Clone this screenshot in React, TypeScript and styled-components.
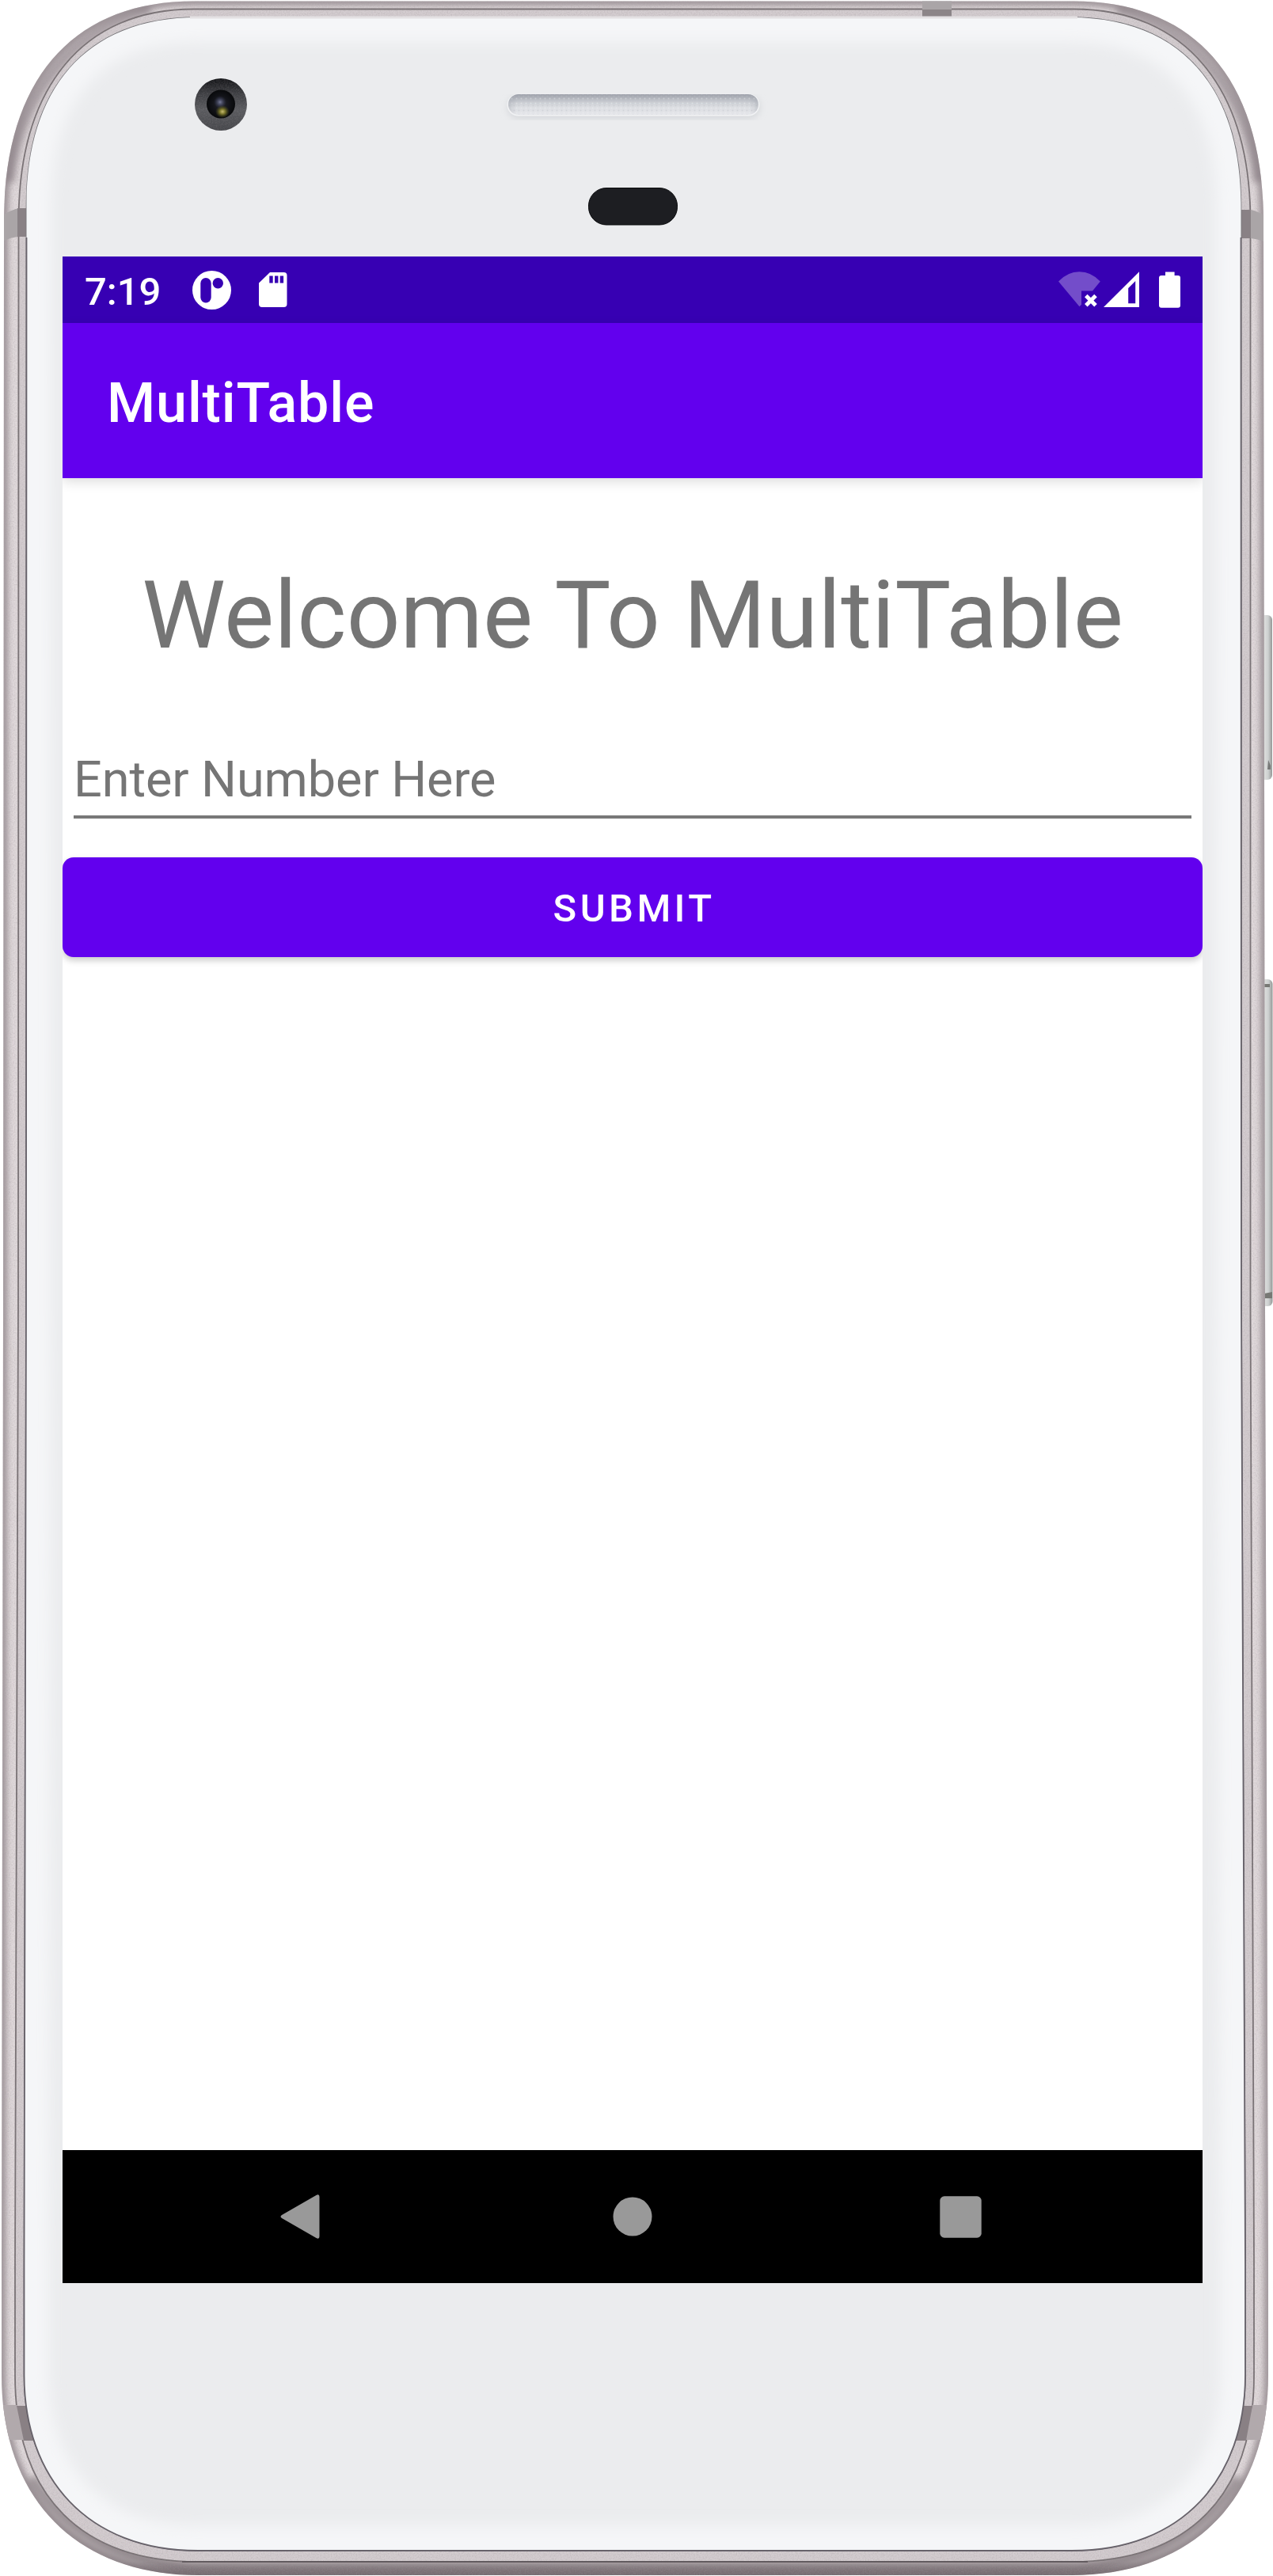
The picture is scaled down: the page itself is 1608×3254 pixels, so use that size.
import React from 'react';
import styled, { createGlobalStyle } from 'styled-components';

const GlobalStyle = createGlobalStyle`
  html, body { margin: 0; padding: 0; background: #fff; }
  *, *::before, *::after { box-sizing: border-box; }
`;

const Phone = styled.main`
  position: relative;
  width: 1608px;
  height: 3254px;
  padding: 324px 89px 370px 79px;
  overflow: hidden;
  font-family: Roboto, 'Liberation Sans', sans-serif;
`;

const BodyArt = styled.svg`
  position: absolute;
  inset: 0;
  display: block;
`;

const Screen = styled.section`
  position: relative;
  display: flex;
  flex-direction: column;
  width: 1440px;
  height: 2560px;
  overflow: hidden;
  background: #fff;
`;

const StatusBar = styled.header`
  display: flex;
  align-items: center;
  flex: 0 0 84px;
  padding: 0 27px 0 28px;
  background: #3700b3;
`;

const Clock = styled.time`
  width: 136px;
  padding-top: 4px;
  color: #fff;
  font-size: 49px;
  font-weight: 500;
  line-height: 57px;
`;

const Icon = styled.svg<{ $after?: number }>`
  display: block;
  flex: none;
  margin-right: ${(p) => p.$after ?? 0}px;
`;

const Spacer = styled.div`
  flex: 1;
`;

const AppBar = styled.div`
  display: flex;
  align-items: center;
  flex: 0 0 196px;
  padding: 6px 56px 0;
  background: #6200ee;
  box-shadow: 0 5px 14px rgba(0, 0, 0, 0.13);
`;

const AppTitle = styled.h1`
  margin: 0;
  color: #fff;
  font-size: 70px;
  font-weight: 500;
  line-height: 82px;
  letter-spacing: 0.875px;
`;

const Content = styled.form`
  display: flex;
  flex-direction: column;
  flex: 1;
`;

const Welcome = styled.h2`
  margin: 104px 0 0;
  color: #757575;
  font-size: 119px;
  font-weight: 400;
  line-height: 140px;
  letter-spacing: 0.1px;
  text-align: center;
  white-space: nowrap;
`;

const NumberInput = styled.input`
  height: 90px;
  margin: 96px 14px 0;
  padding: 2px 0 7px;
  border: 0;
  border-bottom: 4px solid #787878;
  border-radius: 0;
  outline: 0;
  background: transparent;
  color: #212121;
  font: 400 63px/74px Roboto, 'Liberation Sans', sans-serif;
  letter-spacing: -0.08px;
  &::placeholder { color: #757575; opacity: 1; }
`;

const SubmitButton = styled.button`
  height: 126px;
  margin: 49px 0 0;
  padding: 3px 0 0 4px;
  border: 0;
  border-radius: 14px;
  background: #6200ee;
  box-shadow: 0 4px 9px rgba(0, 0, 0, 0.22);
  color: #fff;
  font: 500 49px/58px Roboto, 'Liberation Sans', sans-serif;
  letter-spacing: 4.375px;
`;

const NavBar = styled.nav`
  display: flex;
  align-items: center;
  flex: 0 0 168px;
  padding: 0 279px 0 275px;
  justify-content: space-between;
  background: #000;
`;

const OUTER =
  'M5 280C5 100 92 1.5 245 1.5H1356C1509 1.5 1596 100 1596 280L1598 1650L1602 2860V3000C1602 3160 1504 3253 1354 3253H250C100 3253 2 3160 2 3000V2860L4 1650Z';
const MID =
  'M23.5 280C23.5 110 105 11.5 245 11.5H1356C1496 11.5 1579.5 110 1579.5 280V1650L1584 2860V3000C1584 3155 1499 3236 1354 3236H250C105 3236 19 3155 19 3000V2860L23 1650Z';
const GLASS =
  'M33.5 260C33.5 118 103 22 250 22H1351C1498 22 1567.5 118 1567.5 260L1568 1650L1573 2860V3000C1573 3130 1494 3222 1354 3222H250C110 3222 30.5 3130 30.5 3000V2860L33 1650Z';

function PhoneBody() {
  return (
    <BodyArt width="1608" height="3254" viewBox="0 0 1608 3254" aria-hidden="true">
      <defs>
        <clipPath id="outerClip"><path d={OUTER} /></clipPath>
        <clipPath id="glassClip"><path d={GLASS} /></clipPath>
        <clipPath id="speakerClip"><rect x="642" y="119" width="316" height="26" rx="13" /></clipPath>
        <filter id="soft4" x="-5%" y="-5%" width="110%" height="110%"><feGaussianBlur stdDeviation="4" /></filter>
        <filter id="soft9" x="-5%" y="-5%" width="110%" height="110%"><feGaussianBlur stdDeviation="9" /></filter>
        <filter id="metalGrain" x="0" y="0" width="100%" height="100%">
          <feTurbulence type="fractalNoise" baseFrequency="0.6" numOctaves="2" seed="4" result="n" />
          <feColorMatrix in="n" type="matrix" values="0 0 0 0 0.35  0 0 0 0 0.31  0 0 0 0 0.33  0.9 0 0 0 -0.34" result="g" />
          <feComposite in="g" in2="SourceAlpha" operator="in" />
        </filter>
        <linearGradient id="bottomShade" gradientUnits="userSpaceOnUse" x1="0" y1="3120" x2="0" y2="3253">
          <stop offset="0" stopColor="#70666b" stopOpacity="0" />
          <stop offset="0.87" stopColor="#70666b" stopOpacity="0.35" />
          <stop offset="1" stopColor="#70666b" stopOpacity="0.9" />
        </linearGradient>
        <linearGradient id="speakerFill" x1="0" y1="0" x2="0" y2="1">
          <stop offset="0" stopColor="#a5a8b1" />
          <stop offset="0.3" stopColor="#c4c7cd" />
          <stop offset="0.62" stopColor="#dcdee2" />
          <stop offset="1" stopColor="#e5e6ea" />
        </linearGradient>
        <linearGradient id="keyFill" x1="0" y1="0" x2="1" y2="0">
          <stop offset="0" stopColor="#a9aaa9" />
          <stop offset="0.35" stopColor="#e0e1df" />
          <stop offset="0.7" stopColor="#cdd0d0" />
          <stop offset="1" stopColor="#949896" />
        </linearGradient>
        <linearGradient id="cameraRing" x1="0" y1="0" x2="0" y2="1">
          <stop offset="0" stopColor="#121316" />
          <stop offset="0.28" stopColor="#3c3d41" />
          <stop offset="0.6" stopColor="#5a5b5f" />
          <stop offset="1" stopColor="#45464a" />
        </linearGradient>
        <radialGradient id="lens">
          <stop offset="0" stopColor="#25262e" />
          <stop offset="0.6" stopColor="#121318" />
          <stop offset="1" stopColor="#08090b" />
        </radialGradient>
        <radialGradient id="glintBlue">
          <stop offset="0" stopColor="#777b98" />
          <stop offset="1" stopColor="#34385a" stopOpacity="0" />
        </radialGradient>
        <radialGradient id="glintGold">
          <stop offset="0" stopColor="#c9bd72" />
          <stop offset="0.4" stopColor="#777329" />
          <stop offset="1" stopColor="#4a4b1d" stopOpacity="0" />
        </radialGradient>
        <pattern id="mesh" width="6" height="6" patternUnits="userSpaceOnUse">
          <circle cx="1.5" cy="1.5" r="1" fill="#c2c4cb" />
          <circle cx="4.5" cy="4.5" r="1" fill="#eeeef1" />
        </pattern>
      </defs>

      <rect x="1590" y="777" width="17" height="208" rx="6" fill="url(#keyFill)" />
      <path d="M1602 960L1605 967V972H1601Z" fill="#777978" />
      <rect x="1590" y="1237" width="17.5" height="413" rx="6" fill="url(#keyFill)" />
      <path d="M1597 1243H1604V1247H1597ZM1597 1634L1607 1632V1640H1597Z" fill="#777874" />

      <path d={OUTER} fill="#e0d9db" />
      <g clipPath="url(#outerClip)">
        <path d={OUTER} fill="none" stroke="#877d82" strokeWidth="8" filter="url(#soft4)" />
        <path d="M12 230C25 120 90 38 190 12M1589 230C1576 120 1511 38 1411 12" fill="none" stroke="#7a6f75" strokeWidth="13" strokeOpacity="0.55" filter="url(#soft4)" />
        <path d="M40 3130C80 3195 150 3232 240 3245H1364C1454 3232 1524 3195 1564 3130" fill="none" stroke="#6c6267" strokeWidth="13" strokeOpacity="0.55" filter="url(#soft4)" />
        <path d={OUTER} fill="url(#bottomShade)" />
      </g>
      <path d={MID} fill="#d3cccf" stroke="#777073" strokeWidth="1.8" />
      <path d={`${OUTER}${GLASS}`} fillRule="evenodd" fill="#000" filter="url(#metalGrain)" opacity="0.65" />

      <g clipPath="url(#outerClip)">
        <path d="M0 274Q12 266 23 263V299Q12 300 0 307Z" fill="#aaa5a7" />
        <path d="M22 263H34V299H22Z" fill="#898185" />
        <path d="M1601 275Q1590 267 1580 265V301Q1590 302 1601 307Z" fill="#aaa5a7" />
        <path d="M1580 265H1567V301H1580Z" fill="#898185" />
        <path d="M0 3038H22L31 3082H0Z" fill="#b1a9ac" />
        <path d="M21 3039H34L46 3083H30Z" fill="#898084" />
        <path d="M1604 3038H1582L1573 3082H1604Z" fill="#b1a9ac" />
        <path d="M1582 3039H1569L1557 3083H1574Z" fill="#898084" />
        <path d="M1165 0H1202V12H1165Z" fill="#aaa5a7" />
        <path d="M1165 12H1202V23H1165Z" fill="#8c8588" />
      </g>

      <path d={GLASS} fill="#ebecee" stroke="#77767a" strokeWidth="1.6" />
      <g clipPath="url(#glassClip)">
        <path d={GLASS} fill="none" stroke="#f5f6f8" strokeWidth="62" filter="url(#soft9)" />
      </g>
      <path d="M240 22H1361" stroke="#e4e1e3" strokeWidth="3" />
      <path d="M33.5 300L33 1650L30.5 2860V3000C30.5 3130 110 3222 250 3222H1354C1494 3222 1573 3130 1573 3000V2860L1568 1650L1567.5 300" fill="none" stroke="#67626a" strokeWidth="1.8" />
      <path d="M230 3236H1374" stroke="#625b5f" strokeWidth="2" />

      <circle cx="279" cy="132" r="33" fill="url(#cameraRing)" />
      <circle cx="279" cy="132" r="33" fill="#fff" filter="url(#metalGrain)" opacity="0.5" />
      <circle cx="279" cy="131.5" r="18" fill="url(#lens)" />
      <circle cx="278" cy="129" r="8" fill="url(#glintBlue)" />
      <ellipse cx="281" cy="141" rx="9" ry="8" fill="url(#glintGold)" />

      <rect x="641" y="121" width="319" height="29" rx="14" fill="#d6d8db" filter="url(#soft4)" />
      <rect x="640.5" y="118.5" width="319" height="28" rx="14" fill="#f1f2f4" />
      <rect x="642" y="119" width="316" height="26" rx="13" fill="url(#speakerFill)" />
      <g clipPath="url(#speakerClip)">
        <rect x="642" y="119" width="316" height="26" fill="url(#mesh)" opacity="0.5" />
        <path d="M642 147V132Q642 119 656 119H944Q958 119 958 132V147" fill="none" stroke="#8e929c" strokeWidth="5" strokeOpacity="0.6" filter="url(#soft4)" />
      </g>
      <rect x="743.5" y="237.5" width="112" height="46.5" rx="22.5" fill="#1d1e22" stroke="#090a0c" strokeWidth="1" />
    </BodyArt>
  );
}

export default function App() {
  return (
    <>
      <GlobalStyle />
      <Phone>
        <PhoneBody />
        <Screen>
          <StatusBar>
            <Clock>7:19</Clock>
            <Icon width="49" height="49" viewBox="0 0 49 49" $after={35}>
              <circle cx="24.5" cy="24.5" r="24.5" fill="#fff" />
              <rect x="10.3" y="9" width="13.4" height="31.5" rx="6.7" fill="#3700b3" />
              <circle cx="32.3" cy="15.8" r="6.7" fill="#3700b3" />
            </Icon>
            <Icon width="36" height="44" viewBox="0 0 36 44">
              <path d="M14 0H31.5Q35.5 0 35.5 4V40Q35.5 44 31.5 44H4Q0 44 0 40V13.5Z" fill="#fff" />
              <path d="M13.3 4.5H17.7V13.5H13.3ZM20 4.5H24.4V13.5H20ZM26.7 4.5H31.1V13.5H26.7Z" fill="#3700b3" />
            </Icon>
            <Spacer />
            <Icon width="156" height="52" viewBox="1336 340 156 52">
              <path d="M1337 355.5Q1348.5 343.2 1363.4 343.2Q1378.5 343.2 1389.8 355.5L1380 367.5H1366V384.8L1363.5 387.2Z" fill="#fff" fillOpacity="0.3" />
              <path d="M1371.8 373.6L1384 385.8M1384 373.6L1371.8 385.8" fill="none" stroke="#fff" strokeWidth="5" />
              <path fillRule="evenodd" d="M1394 388L1439 343.3V388ZM1425.2 364V383.2H1434.2V355Z" fill="#fff" />
              <path d="M1472 343.6H1483.6V348H1488Q1491 348 1491 351V385.8Q1491 388.8 1488 388.8H1467Q1464 388.8 1464 385.8V351Q1464 348 1467 348H1472Z" fill="#fff" />
            </Icon>
          </StatusBar>
          <AppBar>
            <AppTitle>MultiTable</AppTitle>
          </AppBar>
          <Content>
            <Welcome>Welcome To MultiTable</Welcome>
            <NumberInput placeholder="Enter Number Here" />
            <SubmitButton type="button">SUBMIT</SubmitButton>
          </Content>
          <NavBar>
            <Icon width="57" height="56" viewBox="0 0 57 56">
              <path d="M45 1.2Q49.5 -1.5 49.5 3V53Q49.5 57.5 45 54.8L2 30Q-1 28 2 26Z" fill="#999" />
            </Icon>
            <Icon width="50" height="50" viewBox="0 0 50 50">
              <circle cx="25" cy="25" r="24.5" fill="#999" />
            </Icon>
            <Icon width="53" height="53" viewBox="0 0 53 53">
              <rect x="0.3" y="0.3" width="52.4" height="52.4" rx="5.5" fill="#999" />
            </Icon>
          </NavBar>
        </Screen>
      </Phone>
    </>
  );
}
